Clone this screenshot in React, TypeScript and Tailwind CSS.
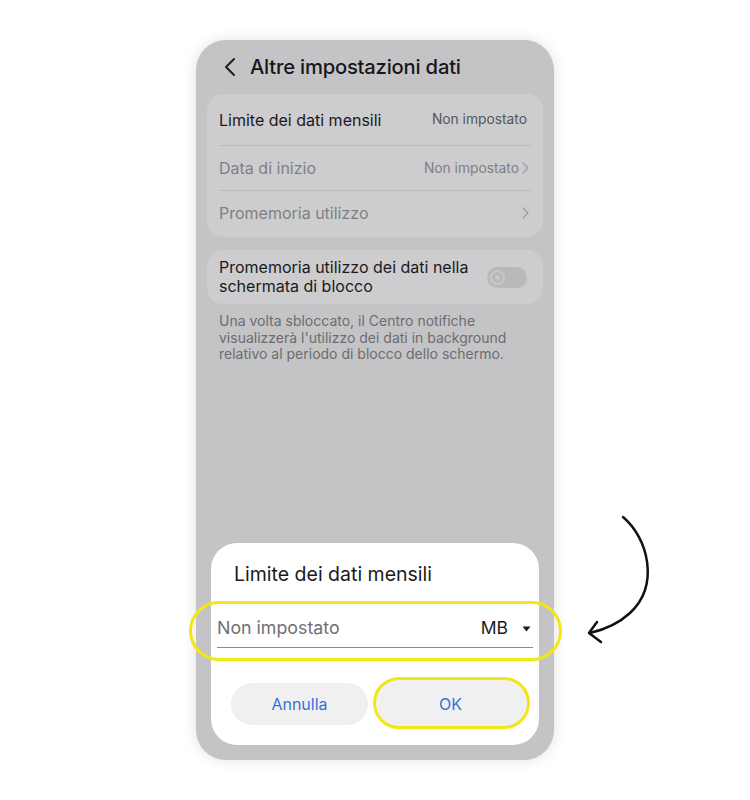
import React from 'react';

const font = { fontFamily: 'Inter, "Noto Sans", sans-serif' };

const Chevron = () => (
  <svg width="7" height="12" viewBox="0 0 7 12" className="ml-[3px]">
    <path d="M1 1l5 5-5 5" fill="none" stroke="#9a9a9c" strokeWidth="1.2" strokeLinecap="round" strokeLinejoin="round" />
  </svg>
);

export default function App() {
  return (
    <div className="relative min-h-[800px] bg-white pt-[40px]" style={font}>
      <div className="mx-auto flex h-[720px] w-[358px] flex-col rounded-[30px] bg-[#c4c4c6] px-[11px] pb-[15px] shadow-[0_0_14px_rgba(0,0,0,0.12)]">
        {/* header */}
        <div className="flex h-[54px] items-center pl-[16px]">
          <svg width="14" height="20" viewBox="0 0 14 20">
            <path d="M11 2L3 10l8 8" fill="none" stroke="#1c1c1e" strokeWidth="2" strokeLinecap="round" strokeLinejoin="round" />
          </svg>
          <span className="ml-[13px] text-[20.2px] font-medium tracking-[-0.2px] text-[#161618]">Altre impostazioni dati</span>
        </div>

        {/* card 1 */}
        <div className="rounded-[16px] bg-[#cdcdcf] px-[12px]">
          <div className="flex h-[51px] items-center justify-between pr-[4px]">
            <span className="text-[16px] text-[#1a1a1c]">Limite dei dati mensili</span>
            <span className="text-[13.8px] text-[#55555a]">Non impostato</span>
          </div>
          <div className="h-px bg-[#bdbdbf]" />
          <div className="flex h-[44px] items-center justify-between pr-[2px]">
            <span className="text-[16px] text-[#7f7f82]">Data di inizio</span>
            <span className="flex items-center text-[13.8px] text-[#808083]">
              Non impostato
              <Chevron />
            </span>
          </div>
          <div className="h-px bg-[#bdbdbf]" />
          <div className="flex h-[46px] items-center justify-between pb-[2px] pr-[2px]">
            <span className="text-[16px] text-[#7f7f82]">Promemoria utilizzo</span>
            <Chevron />
          </div>
        </div>

        {/* card 2 */}
        <div className="mt-[13px] flex h-[54px] items-center justify-between rounded-[16px] bg-[#cdcdcf] pl-[12px] pr-[16px]">
          <span className="text-[16px] leading-[19px] text-[#1a1a1c]">
            Promemoria utilizzo dei dati nella
            <br />
            schermata di blocco
          </span>
          <div className="flex h-[21px] w-[40px] items-center rounded-full bg-[#b9b9bb] pl-[3px]">
            <div className="flex h-[15px] w-[15px] items-center justify-center rounded-full border-[2px] border-[#c9c9cb] bg-[#b9b9bb]">
              <div className="h-[5px] w-[5px] rounded-full bg-[#c9c9cb]" />
            </div>
          </div>
        </div>

        <p className="mt-[9px] px-[12px] text-[14px] leading-[16.5px] text-[#6c6c6f]">
          Una volta sbloccato, il Centro notifiche
          <br />
          visualizzerà l'utilizzo dei dati in background
          <br />
          relativo al periodo di blocco dello schermo.
        </p>

        {/* dialog */}
        <div className="mx-[4px] mt-auto rounded-[26px] bg-white px-[6px] pb-[20px] pt-[18px]">
          <div className="pl-[17px] text-[19.5px] leading-[27px] text-[#1a1a1c]">Limite dei dati mensili</div>

          <div className="relative mt-[22px] flex h-[38px] items-center justify-between border-b border-[#8a8a8c] pr-[2px]">
            <span className="pointer-events-none absolute -bottom-[14px] -left-[28px] -right-[29px] -top-[9px] rounded-full border-[3px] border-[#f2e714]" />
            <span className="text-[17.8px] text-[#707073]">Non impostato</span>
            <span className="flex items-center text-[17.5px] text-[#1a1a1c]">
              MB
              <svg width="9" height="6" viewBox="0 0 9 6" className="ml-[14px]">
                <path d="M0.5 0.5h8L4.5 5.5z" fill="#1a1a1c" />
              </svg>
            </span>
          </div>

          <div className="mt-[35px] flex gap-[14px] px-[14px]">
            <button className="h-[42px] flex-1 rounded-full bg-[#f0f0f0] text-[16px] text-[#3b6fd6]">Annulla</button>
            <button className="relative h-[42px] flex-1 rounded-full text-[16px] text-[#3b6fd6]">
              <span className="absolute -bottom-[4px] -left-[9px] -right-[11px] -top-[6px] rounded-full border-[3px] border-[#f2e714] bg-[#f0f0f0]" />
              <span className="relative">OK</span>
            </button>
          </div>
        </div>
      </div>

      {/* arrow */}
      <svg className="absolute left-0 top-0" width="750" height="800" viewBox="0 0 750 800" fill="none">
        <path d="M623 517C648 538 660 585 630 613C617 625 603 630 590 633" stroke="#111" strokeWidth="2.5" strokeLinecap="round" />
        <path d="M597 622L589 633L601 642" stroke="#111" strokeWidth="2.5" strokeLinecap="round" strokeLinejoin="round" />
      </svg>
    </div>
  );
}
